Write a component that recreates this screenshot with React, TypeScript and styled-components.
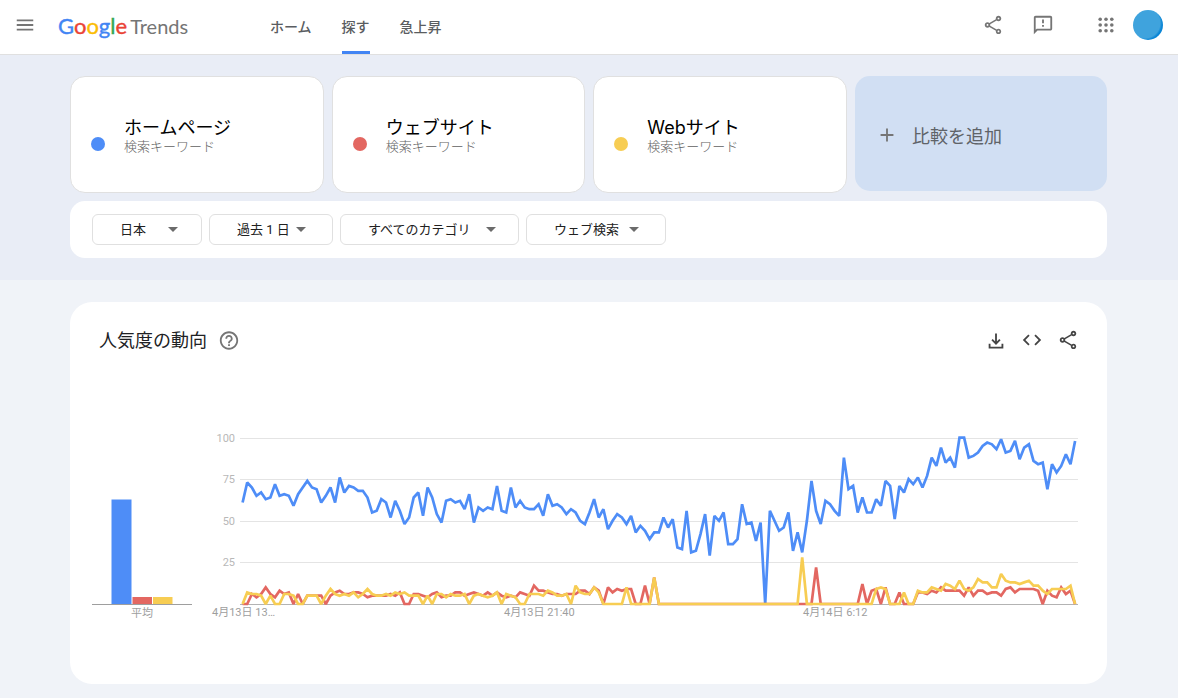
import React from "react";
import styled, { createGlobalStyle } from "styled-components";
import { MdMenu, MdOutlineShare, MdOutlineFeedback, MdCode, MdHelpOutline, MdAdd } from "react-icons/md";

const BLUE = "#4e8df7";
const RED = "#e36761";
const YELLOW = "#f7cd53";

const GlobalStyle = createGlobalStyle`
  * { box-sizing: border-box; }
  body {
    margin: 0;
    background: #f0f3f8;
    color: #202124;
    font-family: Roboto, "Noto Sans CJK JP", sans-serif;
  }
  button, select { font-family: inherit; }
  h1, h2, p { margin: 0; font-weight: 400; }
`;

const Header = styled.header`
  display: flex;
  align-items: center;
  height: 55px;
  padding: 0 15px 4px 14px;
  background: #fff;
  border-bottom: 1px solid #e0e0e0;
`;

const IconButton = styled.button<{ $color?: string }>`
  display: flex;
  align-items: center;
  justify-content: center;
  width: 22px;
  height: 22px;
  padding: 0;
  border: 0;
  background: none;
  color: ${(p) => p.$color ?? "#757575"};
  font-size: 22px;
  cursor: pointer;
`;

const Logo = styled.a`
  display: flex;
  align-items: baseline;
  gap: 3px;
  width: 128px;
  margin: 2px 84px 0 22px;
  color: #757575;
  font-family: Lato, sans-serif;
  font-size: 20px;
  line-height: 28px;
  text-decoration: none;
`;

const Wordmark = styled.span`
  font-size: 22px;
  font-weight: 400;
`;

const Letter = styled.span<{ $color: string }>`
  color: ${(p) => p.$color};
  -webkit-text-stroke: 0.4px ${(p) => p.$color};
`;

const Nav = styled.nav`
  display: flex;
  gap: 30px;
  align-self: stretch;
`;

const NavLink = styled.a<{ $active?: boolean }>`
  display: flex;
  align-items: center;
  height: 54px;
  border-bottom: 3px solid ${(p) => (p.$active ? "#4285f4" : "transparent")};
  border-radius: 2px 2px 0 0;
  color: #5a5d61;
  font-size: 14px;
  font-weight: 500;
  text-decoration: none;
`;

const Actions = styled.div`
  display: flex;
  align-items: center;
  margin-left: auto;
`;

const ActionSlot = styled.div<{ $after: number }>`
  margin-right: ${(p) => p.$after}px;
`;

const Avatar = styled.button`
  width: 30px;
  height: 30px;
  padding: 0;
  border: 0;
  border-radius: 50%;
  background: radial-gradient(circle at 12px 13px, #3fa3dd 15px, #0b86d6 17px);
`;

const Hero = styled.section`
  padding: 21px 71px 22px 70px;
  background: #e9edf6;
`;

const Terms = styled.div`
  display: grid;
  grid-template-columns: repeat(3, 1fr) 252px;
  align-items: start;
  gap: 8px;
`;

const TermCard = styled.article`
  display: flex;
  align-items: center;
  gap: 19px;
  height: 117px;
  padding: 4px 19px 0 20px;
  background: #fff;
  border: 1px solid #e0e0e0;
  border-radius: 15px;
`;

const Dot = styled.span<{ $color: string }>`
  width: 14px;
  height: 14px;
  margin-top: 15px;
  border-radius: 50%;
  background: ${(p) => p.$color};
`;

const TermName = styled.h2`
  color: #000;
  font-family: Inter, "Noto Sans CJK JP", sans-serif;
  font-size: 18px;
  line-height: 20px;
`;

const TermKind = styled.p`
  color: #616161;
  font-size: 13px;
  font-weight: 300;
  line-height: 18px;
`;

const AddCard = styled.button`
  display: flex;
  align-items: center;
  gap: 14px;
  height: 115px;
  padding: 2px 21px 0;
  border: 0;
  border-radius: 15px;
  background: #d1dff3;
  color: #5f6368;
  font-size: 18px;
  cursor: pointer;
`;

const Filters = styled.div`
  display: flex;
  flex-wrap: wrap;
  gap: 7px;
  margin-top: 8px;
  padding: 13px 22px;
  background: #fff;
  border-radius: 15px;
`;

const FilterLabel = styled.label`
  position: relative;
  display: block;
`;

const FilterSelect = styled.select<{ $width: number }>`
  appearance: none;
  display: block;
  width: ${(p) => p.$width}px;
  height: 31px;
  padding: 0 0 0 27px;
  border: 1px solid #e0e0e0;
  border-radius: 6px;
  background: #fff;
  color: #212121;
  font-size: 13px;
`;

const Caret = styled.span<{ $right: number }>`
  position: absolute;
  top: 13px;
  right: ${(p) => p.$right}px;
  border: 5px solid transparent;
  border-top-color: #6b6b6b;
  border-bottom: 0;
  pointer-events: none;
`;

const Main = styled.main`
  padding: 22px 71px 14px 70px;
`;

const ChartCard = styled.section`
  padding: 16px 27px 64px 22px;
  background: #fff;
  border-radius: 22px;
`;

const ChartHeader = styled.div`
  display: flex;
  align-items: center;
  gap: 11px;
  height: 44px;
  padding: 0 1px 0 7px;
`;

const ChartTitle = styled.h1`
  padding-top: 2px;
  font-size: 18px;
  line-height: 24px;
`;

const ChartTools = styled.div`
  display: flex;
  gap: 14px;
  margin-left: auto;
`;

const Plots = styled.div`
  display: flex;
  gap: 18px;
  margin-top: 68px;
`;

const Plot = styled.svg<{ $share: number }>`
  display: block;
  flex: ${(p) => p.$share} 1 0;
  min-width: 0;
  font-size: 11px;
`;

const blue = [
  61, 73, 70, 65, 67, 63, 64, 72, 65, 66, 65, 59, 66, 70, 74, 70, 69, 61, 65, 70, 61, 76, 67, 71, 70, 68, 68, 64, 55, 56,
  63, 61, 52, 62, 56, 48, 52, 64, 67, 53, 70, 64, 54, 49, 62, 63, 61, 62, 57, 66, 49, 58, 56, 58, 57, 71, 56, 55, 70, 58,
  62, 58, 57, 57, 60, 53, 66, 59, 60, 58, 54, 57, 55, 50, 48, 55, 63, 52, 57, 45, 50, 54, 52, 48, 53, 43, 47, 44, 39, 43,
  43, 52, 46, 51, 34, 33, 56, 31, 32, 42, 54, 29, 53, 50, 55, 36, 36, 39, 60, 48, 49, 38, 49, 0, 56, 50, 44, 46, 55, 32,
  43, 31, 50, 74, 56, 48, 62, 60, 56, 53, 88, 69, 71, 55, 64, 55, 55, 63, 59, 74, 71, 51, 71, 67, 75, 72, 76, 70, 77, 88,
  83, 94, 85, 88, 82, 100, 100, 88, 89, 91, 95, 97, 96, 93, 99, 91, 92, 98, 87, 94, 96, 86, 84, 85, 69, 84, 79, 83, 90, 84,
  98,
];

const zeros = (n: number) => new Array<number>(n).fill(0);

const red = [
  0, 0, 6, 4, 6, 10, 6, 4, 8, 6, 7, 0, 6, 0, 5, 5, 5, 5, 0, 5, 7, 8, 6, 6, 7, 7, 6, 4, 5, 5,
  5, 5, 6, 5, 7, 0, 0, 6, 6, 5, 4, 6, 7, 4, 5, 5, 7, 7, 5, 6, 7, 6, 5, 7, 5, 7, 5, 4, 5, 4,
  7, 6, 5, 11, 8, 8, 7, 6, 6, 5, 6, 6, 6, 8, 8, 6, 10, 8, 0, 10, 7, 9, 8, 9, 9, 0, 0, 11, 0, 16,
  ...zeros(34), 22, ...zeros(9), 12, 0, 8, 9, 0, 10, 0, 0, 7, 0, 0, 0, 7, 7, 6, 8,
  7, 10, 8, 8, 8, 8, 5, 10, 5, 8, 8, 6, 7, 7, 5, 9, 10, 7, 9, 9, 9, 9, 8, 0, 8, 5, 4, 10, 6, 8,
  0,
];

const yellow = [
  0, 7, 6, 6, 5, 0, 5, 0, 0, 6, 6, 5, 0, 0, 5, 5, 5, 0, 5, 9, 6, 5, 6, 5, 7, 4, 6, 9, 6, 5,
  5, 6, 5, 7, 6, 7, 5, 5, 5, 0, 5, 0, 6, 6, 4, 6, 5, 5, 6, 0, 5, 6, 5, 4, 5, 7, 0, 6, 5, 4,
  0, 0, 6, 6, 6, 5, 8, 7, 5, 5, 6, 0, 11, 7, 6, 6, 10, 7, 0, 0, 0, 0, 0, 10, 0, 0, 0, 0, 0, 16,
  ...zeros(31), 28, ...zeros(15), 9, 10, 9, 0, 0, 0, 7, 0, 0, 8, 7, 7, 10,
  9, 8, 12, 11, 9, 14, 9, 8, 10, 15, 13, 13, 10, 10, 18, 14, 13, 13, 12, 13, 14, 11, 11, 8, 6, 9, 9, 9, 9, 11,
  0,
];

const BASE = 174;
const yOf = (value: number) => BASE - value * 1.664;
const toPoints = (values: number[]) =>
  values.map((v, i) => `${(32.6 + i * 4.625).toFixed(1)},${yOf(v).toFixed(1)}`).join(" ");

const terms = [
  { name: "ホームページ", color: BLUE },
  { name: "ウェブサイト", color: RED },
  { name: "Webサイト", color: YELLOW },
];

const filters = [
  { label: "地域", value: "日本", width: 110, right: 24 },
  { label: "期間", value: "過去 1 日", width: 124, right: 27 },
  { label: "カテゴリ", value: "すべてのカテゴリ", width: 179, right: 23 },
  { label: "検索の種類", value: "ウェブ検索", width: 140, right: 27 },
];

const wordmark: [string, string][] = [
  ["G", "#4285f4"],
  ["o", "#ea4335"],
  ["o", "#fbbc05"],
  ["g", "#4285f4"],
  ["l", "#34a853"],
  ["e", "#ea4335"],
];

const AppsIcon = () => (
  <svg width="22" height="22" viewBox="0 0 22 22" fill="currentColor" aria-hidden="true">
    {[5.2, 11, 16.8].map((y) => [5.2, 11, 16.8].map((x) => <circle key={`${x}-${y}`} cx={x} cy={y} r="1.8" />))}
  </svg>
);

const DownloadIcon = () => (
  <svg width="22" height="22" viewBox="0 0 24 24" fill="none" stroke="currentColor" strokeWidth="2" aria-hidden="true">
    <path d="M12 5v11M7.7 11.7l4.3 4.3 4.3-4.3M5 16v4.3h14v-4.3" />
  </svg>
);

const BarPlot = () => (
  <Plot $share={100} viewBox="0 0 100 190" role="img" aria-label="平均">
    <rect x="19.5" y="69.5" width="20" height="104.5" fill={BLUE} />
    <rect x="40.5" y="167" width="19.5" height="7" fill={RED} />
    <rect x="61" y="167" width="19.5" height="7" fill={YELLOW} />
    <path d="M0 174.5h100" stroke="#9e9e9e" />
    <text x="50" y="187" textAnchor="middle" fill="#9e9e9e">平均</text>
  </Plot>
);

const LinePlot = () => (
  <Plot $share={870} viewBox="0 0 870 190" role="img" aria-label="人気度の動向">
    {[100, 75, 50, 25].map((v) => (
      <g key={v}>
        <path d={`M30 ${Math.round(yOf(v)) + 0.5}h838`} stroke="#e4e4e4" />
        <text x="25" y={Math.round(yOf(v)) + 4} textAnchor="end" fill="#b8b8b8">{v}</text>
      </g>
    ))}
    <path d="M30 174.5h838" stroke="#b3b3b3" />
    {[
      [blue, BLUE] as const,
      [red, RED] as const,
      [yellow, YELLOW] as const,
    ].map(([values, color]) => (
      <polyline key={color} points={toPoints(values)} fill="none" stroke={color} strokeWidth="2.7" strokeLinejoin="miter" strokeMiterlimit="2" />
    ))}
    <g fill="#9e9e9e">
      <text x="2" y="186">4月13日 13…</text>
      <text x="294" y="186">4月13日 21:40</text>
      <text x="593" y="186">4月14日 6:12</text>
    </g>
  </Plot>
);

export default function App() {
  return (
    <>
      <GlobalStyle />
      <Header>
        <IconButton aria-label="メニュー"><MdMenu /></IconButton>
        <Logo href="#">
          <Wordmark>
            {wordmark.map(([ch, color], i) => <Letter key={i} $color={color}>{ch}</Letter>)}
          </Wordmark>
          <span>Trends</span>
        </Logo>
        <Nav>
          <NavLink href="#">ホーム</NavLink>
          <NavLink href="#" $active>探す</NavLink>
          <NavLink href="#">急上昇</NavLink>
        </Nav>
        <Actions>
          <ActionSlot $after={28}><IconButton aria-label="共有"><MdOutlineShare /></IconButton></ActionSlot>
          <ActionSlot $after={41}><IconButton aria-label="フィードバック"><MdOutlineFeedback /></IconButton></ActionSlot>
          <ActionSlot $after={16}><IconButton aria-label="アプリ"><AppsIcon /></IconButton></ActionSlot>
          <Avatar aria-label="アカウント" />
        </Actions>
      </Header>
      <Hero>
        <Terms>
          {terms.map((t) => (
            <TermCard key={t.name}>
              <Dot $color={t.color} />
              <div>
                <TermName>{t.name}</TermName>
                <TermKind>検索キーワード</TermKind>
              </div>
            </TermCard>
          ))}
          <AddCard>
            <MdAdd size={22} color="#757575" />
            比較を追加
          </AddCard>
        </Terms>
        <Filters>
          {filters.map((f) => (
            <FilterLabel key={f.label}>
              <FilterSelect $width={f.width} aria-label={f.label}>
                <option>{f.value}</option>
              </FilterSelect>
              <Caret $right={f.right} />
            </FilterLabel>
          ))}
        </Filters>
      </Hero>
      <Main>
        <ChartCard>
          <ChartHeader>
            <ChartTitle>人気度の動向</ChartTitle>
            <IconButton aria-label="ヘルプ"><MdHelpOutline size={23} /></IconButton>
            <ChartTools>
              <IconButton $color="#444" aria-label="ダウンロード"><DownloadIcon /></IconButton>
              <IconButton $color="#444" aria-label="埋め込み"><MdCode /></IconButton>
              <IconButton $color="#444" aria-label="共有"><MdOutlineShare /></IconButton>
            </ChartTools>
          </ChartHeader>
          <Plots>
            <BarPlot />
            <LinePlot />
          </Plots>
        </ChartCard>
      </Main>
    </>
  );
}
